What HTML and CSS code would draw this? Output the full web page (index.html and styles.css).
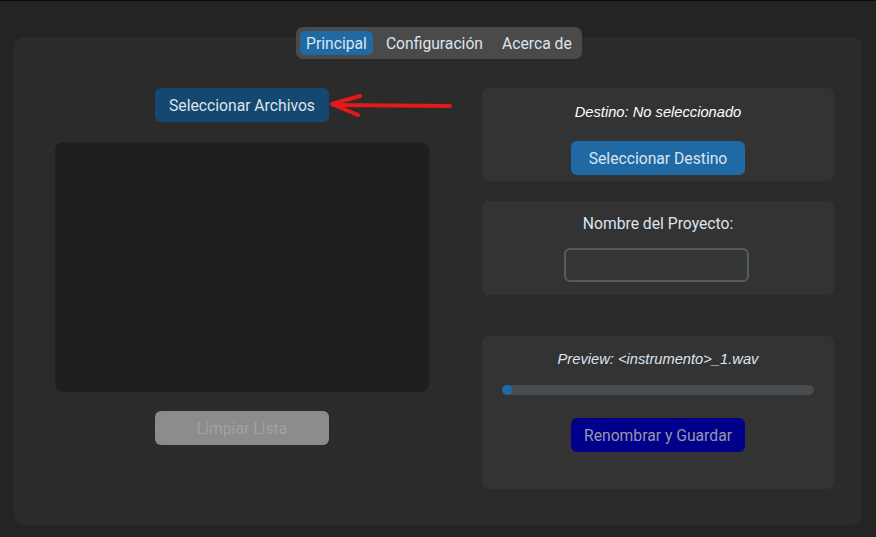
FILE: index.html
```html
<!DOCTYPE html>
<html lang="es">
<head>
<meta charset="utf-8">
<link rel="stylesheet" href="styles.css">
</head>
<body>
<div class="window">
  <div class="tabview">
    <div class="segmented">
      <span class="seg seg-active">Principal</span>
      <span class="seg">Configuración</span>
      <span class="seg">Acerca de</span>
    </div>
    <div class="content">
      <div class="col-left">
        <div class="btn-row">
          <button class="btn btn-dark">Seleccionar Archivos</button>
          <svg class="arrow" width="130" height="26" viewBox="0 0 130 26">
            <g fill="none" stroke="#e3191c" stroke-width="4" stroke-linecap="round" stroke-linejoin="round">
              <line x1="6" y1="13" x2="123" y2="14"/>
              <polyline points="33,4 5,12 31,23"/>
            </g>
          </svg>
        </div>
        <div class="listbox"></div>
        <button class="btn btn-disabled">Limpiar Lista</button>
      </div>
      <div class="col-right">
        <div class="panel panel-dest">
          <div class="italic-label">Destino: No seleccionado</div>
          <button class="btn btn-blue">Seleccionar Destino</button>
        </div>
        <div class="panel panel-name">
          <div class="label">Nombre del Proyecto:</div>
          <div class="entry"></div>
        </div>
        <div class="panel panel-preview">
          <div class="italic-label">Preview: &lt;instrumento&gt;_1.wav</div>
          <div class="progress"><div class="progress-fill"></div></div>
          <button class="btn btn-navy">Renombrar y Guardar</button>
        </div>
      </div>
    </div>
  </div>
</div>
</body>
</html>
```

FILE: styles.css
```css
html, body {
  margin: 0;
  padding: 0;
  background: #242424;
}
body {
  width: 876px;
  height: 537px;
  overflow: hidden;
  font-family: Roboto, "Liberation Sans", sans-serif;
  color: #dce4ee;
}
.window {
  box-sizing: border-box;
  height: 537px;
  border-top: 1px solid #0b0b0b;
  padding: 36px 14px 0 14px;
}
.tabview {
  position: relative;
  width: 848px;
  height: 488px;
  background: #2b2b2b;
  border-radius: 10px;
}
.segmented {
  position: absolute;
  top: -10px;
  left: 282px;
  display: flex;
  gap: 7px;
  padding: 4px;
  background: #4a4a4a;
  border-radius: 7px;
  font-size: 15.7px;
}
.seg {
  display: flex;
  align-items: center;
  height: 24px;
  padding: 0 6px;
  border-radius: 5px;
  color: #dce4ee;
}
.seg-active {
  background: #1f6aa5;
}
.content {
  display: grid;
  grid-template-columns: 374px 352px;
  column-gap: 53px;
  padding: 51px 0 0 41px;
}
.col-left {
  display: flex;
  flex-direction: column;
  align-items: center;
}
.btn-row {
  position: relative;
  display: flex;
  justify-content: center;
  width: 100%;
}
.arrow {
  position: absolute;
  left: 272px;
  top: 4px;
}
.btn {
  width: 174px;
  height: 34px;
  border: none;
  border-radius: 6px;
  font-family: Roboto, "Liberation Sans", sans-serif;
  font-size: 15.7px;
  color: #dce4ee;
  padding: 0;
}
.btn-dark { background: #144870; }
.btn-blue { background: #1f6aa5; }
.btn-navy { background: #00008b; color: #9696a8; }
.btn-disabled {
  background: #8d8b8c;
  color: #a2a1a2;
  margin-top: 19px;
}
.listbox {
  width: 374px;
  height: 250px;
  margin-top: 20px;
  background: #1e1f1f;
  border-radius: 8px;
}
.col-right {
  display: flex;
  flex-direction: column;
}
.panel {
  box-sizing: border-box;
  background: #333333;
  border-radius: 7px;
  display: flex;
  flex-direction: column;
  align-items: center;
}
.italic-label {
  font-family: "Liberation Sans", Arial, sans-serif;
  font-style: italic;
  font-size: 14.7px;
  color: #ffffff;
  line-height: 16px;
}
.panel-dest {
  height: 93px;
  padding-top: 16px;
}
.panel-dest .btn {
  margin-top: 21px;
}
.panel-name {
  height: 94px;
  margin-top: 20px;
  padding-top: 14px;
}
.label {
  font-size: 15.7px;
  line-height: 18px;
}
.entry {
  box-sizing: border-box;
  width: 185px;
  height: 34px;
  margin-top: 15px;
  margin-right: 3px;
  background: #343638;
  border: 2px solid #565b5e;
  border-radius: 6px;
}
.panel-preview {
  height: 153px;
  margin-top: 41px;
  padding-top: 15px;
}
.panel-preview .italic-label {
  color: #dce4ee;
}
.progress {
  width: 312px;
  height: 10px;
  margin-top: 18px;
  background: #4a4d50;
  border-radius: 5px;
  overflow: hidden;
}
.progress-fill {
  width: 10px;
  height: 10px;
  background: #1f6aa5;
  border-radius: 5px;
}
.panel-preview .btn {
  margin-top: 23px;
}
```
